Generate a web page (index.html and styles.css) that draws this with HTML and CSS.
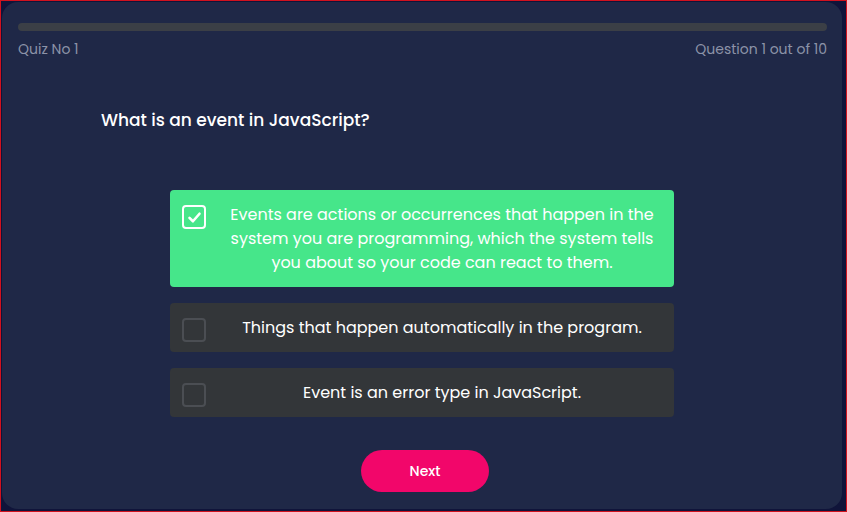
FILE: index.html
```html
<!DOCTYPE html>
<html lang="en">
<head>
<meta charset="utf-8">
<title>Quiz</title>
<link rel="stylesheet" href="styles.css">
</head>
<body>
<div class="frame">
  <main class="card">
    <div class="progress"><div class="progress-fill"></div></div>
    <div class="meta">
      <span>Quiz No 1</span>
      <span>Question 1 out of 10</span>
    </div>
    <h1 class="question">What is an event in JavaScript?</h1>
    <div class="options">
      <div class="option selected">
        <span class="check">
          <svg viewBox="0 0 24 24" width="15" height="15"><polyline points="4,12.5 9.5,18 20,6" fill="none" stroke="#fff" stroke-width="4.2" stroke-linecap="round" stroke-linejoin="round"/></svg>
        </span>
        <span class="option-text">Events are actions or occurrences that happen in the system you are programming, which the system tells you about so your code can react to them.</span>
      </div>
      <div class="option">
        <span class="check"></span>
        <span class="option-text">Things that happen automatically in the program.</span>
      </div>
      <div class="option">
        <span class="check"></span>
        <span class="option-text">Event is an error type in JavaScript.</span>
      </div>
    </div>
    <div class="actions">
      <button class="next">Next</button>
    </div>
  </main>
</div>
</body>
</html>
```
FILE: styles.css
```css
html, body {
  margin: 0;
  padding: 0;
}
body {
  font-family: "Poppins", "Open Sans", sans-serif;
  background: #10143a;
}
.frame {
  box-sizing: border-box;
  width: 847px;
  height: 512px;
  border: 1px solid #d0121e;
  padding: 1px 4px 2px 1px;
  background: #10143a;
}
.card {
  box-sizing: border-box;
  height: 100%;
  background: #1f2847;
  border-radius: 16px;
  padding: 21px 15px 0 16px;
}
.progress {
  height: 8px;
  border-radius: 4px;
  background: #3b3f46;
}
.progress-fill {
  width: 0;
  height: 100%;
}
.meta {
  display: flex;
  justify-content: space-between;
  margin-top: 8px;
  font-size: 14px;
  line-height: 20px;
  color: #8c93a8;
}
.question {
  margin: 48px 0 0 83px;
  font-size: 17px;
  line-height: 26px;
  font-weight: 500;
  color: #ffffff;
}
.options {
  margin: 57px 0 0 152px;
  width: 504px;
  display: flex;
  flex-direction: column;
  gap: 16px;
}
.option {
  display: flex;
  align-items: flex-start;
  padding: 12px 20px 12px 12px;
  border-radius: 4px;
  background: #333639;
  color: #ffffff;
}
.option.selected {
  background: #46e68a;
}
.check {
  flex: none;
  box-sizing: border-box;
  width: 24px;
  height: 24px;
  margin: 3px 0 -3px;
  border: 2px solid #4b4e53;
  border-radius: 4px;
  display: flex;
  align-items: center;
  justify-content: center;
}
.selected .check {
  border-color: #ffffff;
}
.option-text {
  flex: 1;
  margin-left: 24px;
  padding-top: 1px;
  text-align: center;
  font-size: 16px;
  line-height: 24px;
}
.actions {
  margin: 33px 0 0 343px;
}
.next {
  width: 128px;
  height: 42px;
  border: none;
  border-radius: 21px;
  background: #f2066a;
  color: #ffffff;
  font-family: inherit;
  font-size: 14px;
  font-weight: 500;
  cursor: pointer;
}
```
